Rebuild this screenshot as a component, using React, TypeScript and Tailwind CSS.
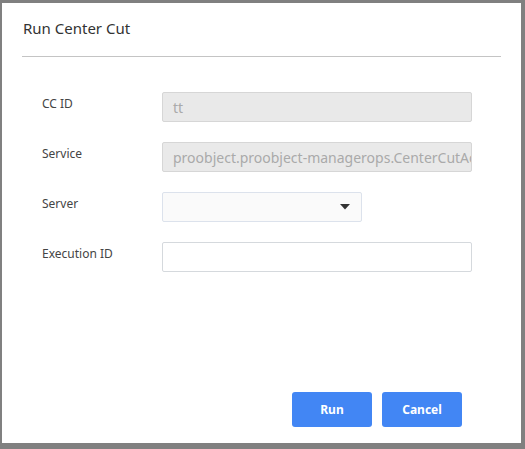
const font = { fontFamily: '"Noto Sans", "Open Sans", sans-serif' };

function Field({ label, children }: { label: string; children: React.ReactNode }) {
  return (
    <div className="flex items-center h-[30px]">
      <div className="w-[120px] text-[12px] text-[#444] -mt-[6px]">{label}</div>
      {children}
    </div>
  );
}

export default function App() {
  return (
    <div
      className="w-[525px] h-[449px] bg-[#808080] pl-[2px] pt-[3px] pr-[4px] pb-[6px]"
      style={font}
    >
      <div className="flex flex-col h-full bg-white px-5">
        <div className="h-[53px] flex items-center pl-[1px] pb-[3px] text-[15px] text-[#333]">
          Run Center Cut
        </div>
        <div className="h-px bg-[#c4c4c4]" />

        <div className="flex flex-col gap-5 pl-5 pt-[35px]">
          <Field label="CC ID">
            <div className="w-[310px] h-[30px] flex items-center px-[10px] bg-[#e9e9e9] border border-[#d6d6d6] rounded-[2px] text-[14px] text-[#aaa] overflow-hidden whitespace-nowrap">
              tt
            </div>
          </Field>
          <Field label="Service">
            <div className="w-[310px] h-[30px] flex items-center pl-[10px] bg-[#e9e9e9] border border-[#d6d6d6] rounded-[2px] text-[14px] text-[#aaa] overflow-hidden whitespace-nowrap">
              proobject.proobject-managerops.CenterCutAc
            </div>
          </Field>
          <Field label="Server">
            <div className="w-[200px] h-[30px] flex items-center justify-end pr-[11px] bg-[#fafafa] border border-[#dce2ec] rounded-[2px]">
              <svg width="10" height="6" viewBox="0 0 10 6">
                <path d="M0 0 L10 0 L5 5.5 Z" fill="#333" />
              </svg>
            </div>
          </Field>
          <Field label="Execution ID">
            <div className="w-[310px] h-[30px] bg-white border border-[#d5d9dd] rounded-[2px]" />
          </Field>
        </div>

        <div className="mt-auto mb-[16px] flex justify-end gap-[10px] pr-[39px]">
          <button className="w-[80px] h-[35px] rounded-[3px] bg-[#4286f4] text-white text-[12px] font-bold">
            Run
          </button>
          <button className="w-[80px] h-[35px] rounded-[3px] bg-[#4286f4] text-white text-[12px] font-bold">
            Cancel
          </button>
        </div>
      </div>
    </div>
  );
}
